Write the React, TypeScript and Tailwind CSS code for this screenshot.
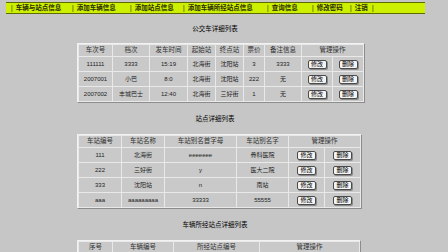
import React from "react";

const navItems = [
  { label: "车辆与站点信息", w: "w-[61px]" },
  { label: "添加车辆信息", w: "w-[58px]" },
  { label: "添加站点信息", w: "w-[53px]" },
  { label: "添加车辆所经站点信息", w: "w-[84px]" },
  { label: "查询信息", w: "w-[45px]" },
  { label: "修改密码", w: "w-[38px]" },
  { label: "注销", w: "w-[22px]" },
];

const busRows = [
  ["111111", "3333", "15:19", "北海街", "沈阳站", "3", "3333"],
  ["2007001", "小巴", "8:0", "北海街", "沈阳站", "222", "无"],
  ["2007002", "丰城巴士", "12:40", "北海街", "三好街", "1", "无"],
];

const stationRows = [
  ["111", "北海街", "eeeeeee", "骨科医院"],
  ["222", "三好街", "y", "医大二院"],
  ["333", "沈阳站", "n", "南站"],
  ["aaa", "aaaaaaaaa", "33333", "55555"],
];

function Btn({ children }: { children: React.ReactNode }) {
  return (
    <span className="inline-flex h-[9px] w-[19px] items-center justify-center rounded-[2px] border border-[#4a4a4a] bg-[#f4f4f4] text-[6px] leading-none text-black shadow-[1px_1px_0_#8a8a8a]">
      {children}
    </span>
  );
}

function Cell({ children }: { children?: React.ReactNode }) {
  return (
    <td className="h-[14px] bg-[#c9c9c9] p-0 text-center align-middle text-[6px] leading-none text-[#222]">
      {children}
    </td>
  );
}

function Head({ children, span }: { children: React.ReactNode; span?: number }) {
  return (
    <th
      colSpan={span}
      className="h-[11px] bg-[#c9c9c9] p-0 text-center align-middle text-[6.5px] font-normal leading-none text-[#333]"
    >
      {children}
    </th>
  );
}

function DataTable({
  cols,
  heads,
  rows,
}: {
  cols: number[];
  heads: string[];
  rows: string[][];
}) {
  return (
    <table className="w-[276px] table-fixed border-separate border-spacing-[1px] border border-t-[#f2f2f2] border-l-[#f2f2f2] border-r-[#8c8c8c] border-b-[#8c8c8c] bg-[#e9e9e9]">
      <colgroup>
        {cols.map((w, i) => (
          <col key={i} style={{ width: w }} />
        ))}
      </colgroup>
      <thead>
        <tr>
          {heads.map((h) => (
            <Head key={h} span={h === "管理操作" ? 2 : undefined}>
              {h}
            </Head>
          ))}
        </tr>
      </thead>
      <tbody>
        {rows.map((r, i) => (
          <tr key={i}>
            {r.map((c, j) => (
              <Cell key={j}>{c}</Cell>
            ))}
            <Cell>
              <Btn>修改</Btn>
            </Cell>
            <Cell>
              <Btn>删除</Btn>
            </Cell>
          </tr>
        ))}
      </tbody>
    </table>
  );
}

export default function App() {
  return (
    <div
      className="h-[252px] w-[448px] overflow-hidden bg-[#c6c6c6] pt-[2px]"
      style={{ fontFamily: '"Liberation Sans", "Noto Sans CJK SC", sans-serif' }}
    >
      <nav className="ml-[6px] flex h-[12px] w-[419px] items-center border-y border-[#5f6a00] bg-[#ccf000] pl-[5px] text-[6.5px] font-bold leading-none text-[#2a2a00]">
        {navItems.map((n) => (
          <div key={n.label} className={`flex shrink-0 items-center ${n.w}`}>
            <span className="font-normal">|</span>
            <span className="ml-[3px]">{n.label}</span>
          </div>
        ))}
        <span className="font-normal">|</span>
      </nav>

      <div className="ml-[77px] w-[276px]">
        <div className="flex h-[29px] items-center justify-center text-[6.5px] text-black">
          公交车详细列表
        </div>
        <DataTable
          cols={[33, 36, 37, 27, 27, 20, 36, 30, 30]}
          heads={["车次号", "档次", "发车时间", "起始站", "终点站", "票价", "备注信息", "管理操作"]}
          rows={busRows}
        />

        <div className="flex h-[31px] items-center justify-center text-[6.5px] text-black">
          站点详细列表
        </div>
        <DataTable
          cols={[42, 42, 71, 51, 35, 35]}
          heads={["车站编号", "车站名称", "车站别名首字母", "车站别名字", "管理操作"]}
          rows={stationRows}
        />

        <div className="flex h-[31px] items-center justify-center text-[6.5px] text-black">
          车辆所经站点详细列表
        </div>
        <DataTable
          cols={[33, 60, 85, 49, 49]}
          heads={["序号", "车辆编号", "所经站点编号", "管理操作"]}
          rows={[]}
        />
      </div>
    </div>
  );
}
